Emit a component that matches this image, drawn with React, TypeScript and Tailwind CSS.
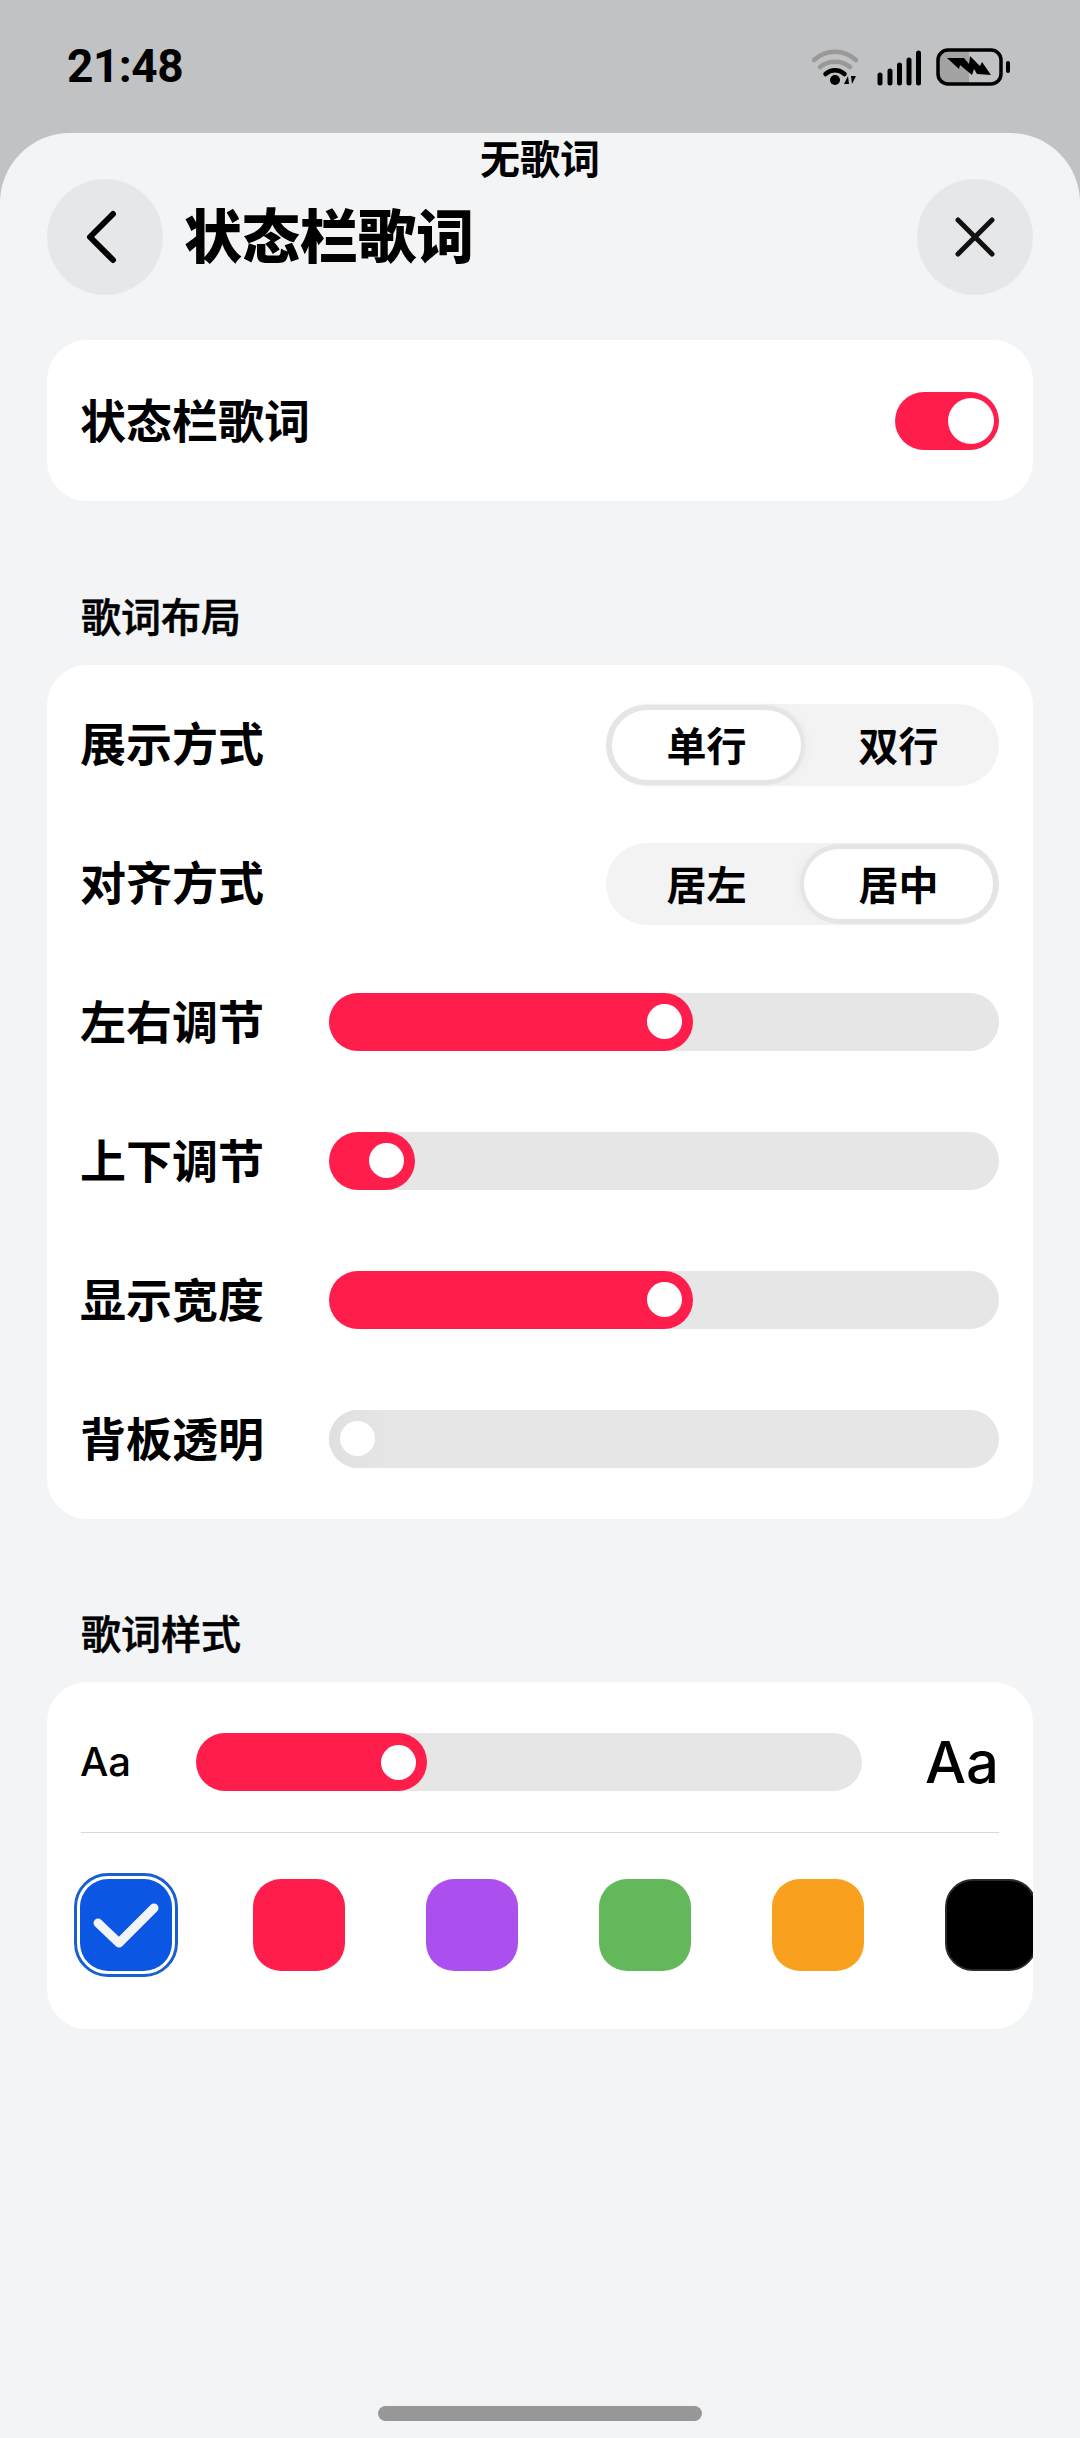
import type { ReactNode } from 'react';

const cjk = { fontFamily: '"Noto Sans CJK SC", sans-serif' };

function SectionLabel({ children, className }: { children: ReactNode; className: string }) {
  return (
    <div className={`px-[81px] pb-[5px] text-[40px] leading-[48px] font-medium text-black [-webkit-text-stroke:0.6px_black] ${className}`}>{children}</div>
  );
}

function RowLabel({ children }: { children: ReactNode }) {
  return <span className="-ml-px pb-[6px] text-[46px] leading-[56px] font-bold text-black">{children}</span>;
}

function Segmented({ options, active }: { options: string[]; active: number }) {
  return (
    <div className="mt-[3px] grid h-[82px] w-[393px] grid-cols-2 gap-[3px] rounded-full bg-[#f3f3f3] p-[6px]">
      {options.map((opt, i) => (
        <div
          key={opt}
          className={
            i !== active
              ? 'flex items-center justify-center pb-[3px] text-[40px] font-bold text-black'
              : i === 0
                ? 'flex items-center justify-center rounded-full bg-white pb-[3px] text-[40px] font-bold text-black shadow-[-1px_0_0_5px_#e5e5e5,3px_0_7px_3px_#ebebeb]'
                : 'flex items-center justify-center rounded-full bg-white pb-[3px] text-[40px] font-bold text-black shadow-[1px_0_0_5px_#e5e5e5,-3px_0_7px_3px_#ebebeb]'
          }
        >
          {opt}
        </div>
      ))}
    </div>
  );
}

function Slider({ fill, width }: { fill: number; width: string }) {
  return (
    <div className={`h-[58px] rounded-full bg-[#e6e6e6] ${width}`}>
      {fill > 0 ? (
        <div className="flex h-full items-center justify-end rounded-full bg-[#ff1d4c] pr-[11px]" style={{ width: fill }}>
          <div className="h-[35px] w-[35px] rounded-full bg-white" />
        </div>
      ) : (
        <div className="flex h-full w-[67px] items-center rounded-full bg-linear-to-r from-[#e0e0e0] to-[#e6e6e6] pl-[11px]">
          <div className="h-[35px] w-[35px] shrink-0 rounded-full bg-white" />
        </div>
      )}
    </div>
  );
}

const rows = [
  { label: '左右调节', fill: 364 },
  { label: '上下调节', fill: 86 },
  { label: '显示宽度', fill: 364 },
  { label: '背板透明', fill: 0 },
];

const swatches = ['#ff1d4c', '#ab50ef', '#63b85c', '#f9a11e'];

export default function App() {
  return (
    <div className="relative flex h-[2438px] w-[1080px] flex-col overflow-hidden bg-[#c1c2c4]" style={cjk}>
      {/* Status bar */}
      <div className="flex h-[133px] shrink-0 items-start justify-between pt-[48px] pr-[68px] pl-[67px]">
        <span className="text-[46px] leading-[36px] font-bold tracking-[-0.5px] text-black" style={{ fontFamily: 'Roboto, sans-serif' }}>
          21:48
        </span>
        <div className="-mt-px flex items-start">
          <svg width="46" height="37" viewBox="0 0 46 37" className="mt-[2px]" fill="none" strokeLinecap="round">
            <path d="M2 11C14 0 32 0 44 11" stroke="#999" strokeWidth="4.5" />
            <path d="M8 18C16 11 30 11 38 18" stroke="#999" strokeWidth="4.5" />
            <path d="M13.5 25C19 20 27 20 32.5 25" stroke="#000" strokeWidth="4.5" />
            <circle cx="23" cy="31" r="5" fill="#000" />
            <path d="M32 35L36 27L37 35ZM39 27L40 35L44 27Z" fill="#000" />
          </svg>
          <svg width="45" height="36" viewBox="0 0 45 36" className="mt-[3px] ml-[19px]" fill="none" stroke="#000" strokeWidth="5" strokeLinecap="round">
            <path d="M3 25V33M13 21V33M22.5 15V33M32 10V33M41.5 3V33" />
          </svg>
          <svg width="76" height="38" viewBox="0 0 76 38" className="mt-[1px] ml-[14px]">
            <path d="M10 2H33V36H10A8 8 0 0 1 2 28V10A8 8 0 0 1 10 2Z" fill="#a3a3a4" />
            <rect x="2" y="2" width="63" height="34" rx="10" fill="none" stroke="#000" strokeWidth="3.5" />
            <path d="M11 10L28 10L33 16L34 8L44 18L46 14L55 27L41 26L38 21L36 27L24 17L23 21Z" fill="#000" />
            <rect x="70" y="13" width="4" height="12" rx="2" fill="#000" />
          </svg>
        </div>
      </div>

      {/* Sheet */}
      <div className="flex flex-1 flex-col rounded-t-[70px] bg-[#f2f4f6]">
        {/* Header */}
        <div className="mt-[46px] flex items-center justify-between px-[47px]">
          <div className="flex items-center">
            <div className="flex h-[116px] w-[116px] items-center justify-center rounded-full bg-[#e6e7e9]">
              <svg width="40" height="60" viewBox="0 0 40 60" fill="none" stroke="#000" strokeWidth="6" strokeLinecap="round" strokeLinejoin="round">
                <path d="M28 7L5 30L28 53" />
              </svg>
            </div>
            <h1 className="ml-[21px] pb-[8px] text-[58px] leading-[70px] font-black text-black">状态栏歌词</h1>
          </div>
          <div className="flex h-[116px] w-[116px] items-center justify-center rounded-full bg-[#e6e7e9]">
            <svg width="40" height="40" viewBox="0 0 40 40" fill="none" stroke="#111" strokeWidth="5" strokeLinecap="round">
              <path d="M3 3L37 37M37 3L3 37" />
            </svg>
          </div>
        </div>

        {/* Switch card */}
        <div className="mx-[47px] mt-[45px] flex h-[161px] items-center justify-between rounded-[40px] bg-white px-[34px]">
          <RowLabel>状态栏歌词</RowLabel>
          <div className="flex h-[58px] w-[104px] items-center justify-end rounded-full bg-[#ff1d4c] pr-[5px]">
            <div className="h-[46px] w-[46px] rounded-full bg-white" />
          </div>
        </div>

        <SectionLabel className="mt-[90px] mb-[21px]">歌词布局</SectionLabel>

        {/* Layout card */}
        <div className="mx-[47px] rounded-[40px] bg-white px-[34px] pt-[9px] pb-[11px]">
          <div className="flex h-[139px] items-center justify-between">
            <RowLabel>展示方式</RowLabel>
            <Segmented options={['单行', '双行']} active={0} />
          </div>
          <div className="flex h-[139px] items-center justify-between">
            <RowLabel>对齐方式</RowLabel>
            <Segmented options={['居左', '居中']} active={1} />
          </div>
          {rows.map((r) => (
            <div key={r.label} className="flex h-[139px] items-center justify-between">
              <RowLabel>{r.label}</RowLabel>
              <Slider fill={r.fill} width="w-[670px]" />
            </div>
          ))}
        </div>

        <SectionLabel className="mt-[89px] mb-[21px]">歌词样式</SectionLabel>

        {/* Style card */}
        <div className="mx-[47px] overflow-hidden rounded-[40px] bg-white pb-[58px]">
          <div className="mx-[34px] flex h-[150px] items-center justify-between pt-[10px]">
            <span className="-ml-px w-[116px] text-[40px] font-medium text-black" style={{ fontFamily: 'Inter, sans-serif' }}>
              Aa
            </span>
            <Slider fill={231} width="w-[666px]" />
            <span className="w-[137px] text-right text-[58px] font-medium text-black" style={{ fontFamily: 'Inter, sans-serif' }}>
              Aa
            </span>
          </div>
          <div className="mx-[34px] h-px bg-[#d9d9d9]" />
          <div className="mt-[46px] flex gap-[81px] pl-[33px]">
            <div className="flex h-[92px] w-[92px] shrink-0 items-center justify-center rounded-[28px] bg-[#0b57e3] outline-[3px] outline-offset-[3px] outline-[#1a5fd0]">
              <svg width="92" height="92" viewBox="0 0 92 92" fill="none" stroke="#f2f4f6" strokeWidth="9" strokeLinecap="round" strokeLinejoin="round">
                <path d="M18 44L39 64L74 29" />
              </svg>
            </div>
            {swatches.map((c) => (
              <div key={c} className="h-[92px] w-[92px] shrink-0 rounded-[28px]" style={{ backgroundColor: c }} />
            ))}
            <div className="h-[92px] w-[92px] shrink-0 rounded-[28px] border-2 border-[#2a2a2a] bg-black" />
          </div>
        </div>

        {/* Home indicator */}
        <div className="mx-auto mt-auto mb-[17px] h-[15px] w-[324px] rounded-full bg-[#979797]" />
      </div>

      {/* Lyric overlay from the status bar */}
      <div className="absolute top-[133px] left-0 w-full text-center text-[40px] leading-[48px] font-bold text-black">无歌词</div>
    </div>
  );
}
